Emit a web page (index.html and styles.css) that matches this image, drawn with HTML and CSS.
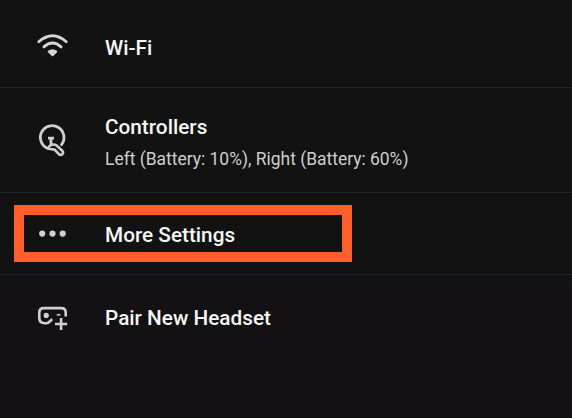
FILE: index.html
```html
<!DOCTYPE html>
<html lang="en">
<head>
<meta charset="utf-8">
<title>Settings</title>
<link rel="stylesheet" href="styles.css">
</head>
<body>
<main class="settings">
  <div class="row">
    <svg class="icon" viewBox="0 0 36 36" fill="none" stroke="#d6d6d6" stroke-width="2.800" stroke-linecap="round">
      <path d="M4.800 12.700Q18.500 0.900 32.200 12.700M9.900 17.900Q18.500 10.200 27.100 17.900"/>
      <path d="M14.700 22.500Q18.500 19.800 22.300 22.500L18.500 26.300Z" fill="#d6d6d6" stroke-width="2" stroke-linejoin="round"/>
    </svg>
    <div class="title">Wi-Fi</div>
  </div>
  <div class="row row-tall">
    <svg class="icon" viewBox="0 0 36 36" fill="none" stroke="#d0d0d0" stroke-width="2.800" stroke-linecap="round" stroke-linejoin="round">
      <path d="M14 26.500A11.800 11.800 0 1 1 27.500 22.700"/>
      <path d="M14 16.200H20M17 17V23.500" stroke-linecap="butt"/>
      <path d="M14 26.500C15.500 22.600 19.500 21.500 22.500 23.400L28.200 28.700C30.500 31.400 27.200 34.400 24.800 32L20.600 27.600Q17.500 27.500 14 26.500" stroke-width="2.600"/>
    </svg>
    <div class="labels">
      <div class="title">Controllers</div>
      <div class="detail">Left (Battery: 10%), Right (Battery: 60%)</div>
    </div>
  </div>
  <div class="row row-highlighted">
    <svg class="icon" viewBox="0 0 36 36" fill="#d0d0d0">
      <circle cx="8.200" cy="17.600" r="3.100"/><circle cx="18.500" cy="17.600" r="3.100"/><circle cx="28.700" cy="17.600" r="3.100"/>
    </svg>
    <div class="title">More Settings</div>
  </div>
  <div class="row">
    <svg class="icon" viewBox="0 0 36 36" fill="none" stroke="#d0d0d0" stroke-width="2.600" stroke-linecap="butt" stroke-linejoin="round">
      <path d="M31.700 17.500V13.500Q31.700 9.100 27.300 9.100H9.700Q5.300 9.100 5.300 13.500V18.500Q5.300 24.200 10.500 24.200H12.500C16 24.200 15.500 21 18.500 20.600"/>
      <circle cx="12.200" cy="16.400" r="2.600" fill="#d0d0d0" stroke="none"/>
      <path d="M22.200 16.500A2.500 2.500 0 0 1 27 16.500Z" fill="#d0d0d0" stroke="none"/>
      <path d="M27.100 18.900V31.100M21 25H33.200"/>
    </svg>
    <div class="title">Pair New Headset</div>
  </div>
</main>
</body>
</html>
```
FILE: styles.css
```css
* {
  box-sizing: border-box;
}

body {
  margin: 0;
  background: linear-gradient(#121212 260px, #131114 290px);
  color: #f6f6f6;
  font-family: Roboto, sans-serif;
}

.settings {
  height: 418px;
  padding-top: 6px;
  overflow: hidden;
}

.row {
  position: relative;
  display: flex;
  align-items: center;
  gap: 35px;
  height: 82px;
  padding: 0 34px;
  border-bottom: 1px solid #222;
}

.row-tall {
  height: 105px;
}

.row:last-child {
  height: 84px;
  border-bottom: 0;
}

.row-highlighted::after {
  content: "";
  box-sizing: border-box;
  position: absolute;
  left: 14px;
  top: 12px;
  width: 338px;
  height: 57px;
  border: 10px solid #ff602b;
}

.icon {
  flex: none;
  width: 36px;
  height: 36px;
}

.labels {
  padding-top: 2px;
}

.title {
  padding-top: 2px;
  font-size: 20.750px;
  font-weight: 500;
  line-height: 24px;
}

.row:last-child .title {
  padding-top: 1px;
}

.detail {
  margin-top: 9px;
  color: #cecece;
  font-size: 17.450px;
  line-height: 22px;
}
```
